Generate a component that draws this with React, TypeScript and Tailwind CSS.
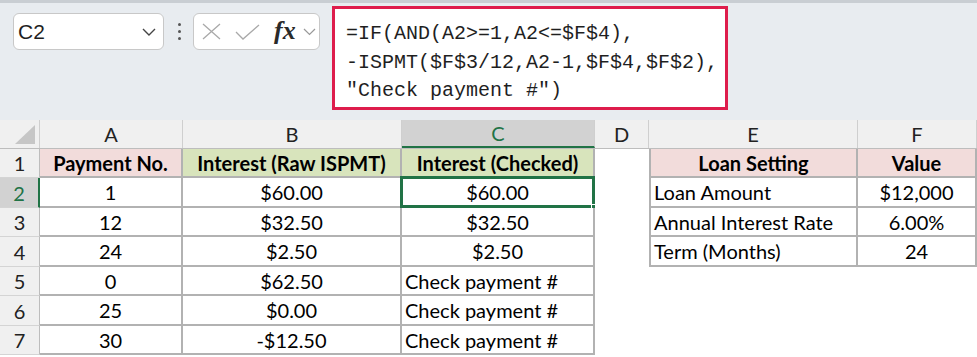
import React from 'react';

const COLS = ['A', 'B', 'C', 'D', 'E', 'F'];
const WIDTHS = ['w-[143px]', 'w-[219px]', 'w-[193px]', 'w-[54px]', 'w-[209px]', 'w-[119px]'];
const HEIGHTS = ['h-[29px]', 'h-[30px]', 'h-[29px]', 'h-[30px]', 'h-[29px]', 'h-[30px]', 'h-[29px]'];

type Cell = { text?: string; bold?: boolean; left?: boolean; fill?: string; border?: boolean; borderL?: boolean };

const pink = 'bg-[#f2dcdb]';
const green = 'bg-[#d8e4bc]';

const rows: Cell[][] = [
  [
    { text: 'Payment No.', bold: true, fill: pink, border: true },
    { text: 'Interest (Raw ISPMT)', bold: true, fill: green, border: true },
    { text: 'Interest (Checked)', bold: true, fill: green, border: true },
    {},
    { text: 'Loan Setting', bold: true, fill: pink, border: true, borderL: true },
    { text: 'Value', bold: true, fill: pink, border: true },
  ],
  [
    { text: '1', border: true },
    { text: '$60.00', border: true },
    { text: '$60.00', border: true },
    {},
    { text: 'Loan Amount', left: true, border: true, borderL: true },
    { text: '$12,000', border: true },
  ],
  [
    { text: '12', border: true },
    { text: '$32.50', border: true },
    { text: '$32.50', border: true },
    {},
    { text: 'Annual Interest Rate', left: true, border: true, borderL: true },
    { text: '6.00%', border: true },
  ],
  [
    { text: '24', border: true },
    { text: '$2.50', border: true },
    { text: '$2.50', border: true },
    {},
    { text: 'Term (Months)', left: true, border: true, borderL: true },
    { text: '24', border: true },
  ],
  [
    { text: '0', border: true },
    { text: '$62.50', border: true },
    { text: 'Check payment #', left: true, border: true },
    {},
    {},
    {},
  ],
  [
    { text: '25', border: true },
    { text: '$0.00', border: true },
    { text: 'Check payment #', left: true, border: true },
    {},
    {},
    {},
  ],
  [
    { text: '30', border: true },
    { text: '-$12.50', border: true },
    { text: 'Check payment #', left: true, border: true },
    {},
    {},
    {},
  ],
];

const FormulaBar: React.FC = () => (
  <div className="h-[120px] bg-[#e8ecf0] flex items-start border-t-[3px] border-[#c9ced3]">
    {/* Name box */}
    <div className="mt-[10px] ml-[13px] w-[151px] h-[37px] bg-white border border-[#c8c8c8] rounded-[6px] flex items-center justify-between pl-[4px] pr-[7px]">
      <span className="text-[21px] text-[#1f1f1f]">C2</span>
      <svg width="14" height="8" viewBox="0 0 14 8">
        <path d="M1 1 L7 7 L13 1" fill="none" stroke="#444" strokeWidth="1.4" />
      </svg>
    </div>
    {/* dots */}
    <div className="mt-[20px] ml-[13px] w-[4px] flex flex-col gap-[4px] items-center">
      <span className="w-[3px] h-[3px] bg-[#555] rounded-full" />
      <span className="w-[3px] h-[3px] bg-[#555] rounded-full" />
      <span className="w-[3px] h-[3px] bg-[#555] rounded-full" />
    </div>
    {/* buttons */}
    <div className="mt-[10px] ml-[12px] w-[127px] h-[37px] bg-white border border-[#c8c8c8] rounded-[6px] flex items-center pl-[8px]">
      <svg width="19" height="17" viewBox="0 0 19 17">
        <path d="M1 1 L18 16 M18 1 L1 16" stroke="#a9a9a9" strokeWidth="1.3" fill="none" />
      </svg>
      <svg width="25" height="16" viewBox="0 0 25 16" className="ml-[14px]">
        <path d="M1 8 L8 15 L24 1" stroke="#a9a9a9" strokeWidth="1.3" fill="none" />
      </svg>
      <span className="ml-[14px] text-[26px] italic font-bold text-[#2a2a2a] leading-none pb-[2px]" style={{ fontFamily: '"Liberation Serif", serif' }}>
        fx
      </span>
      <svg width="13" height="8" viewBox="0 0 13 8" className="ml-[7px]">
        <path d="M1 1 L6.5 6.5 L12 1" fill="none" stroke="#999" strokeWidth="1.2" />
      </svg>
    </div>
    {/* formula */}
    <div className="mt-[3px] ml-[12px] w-[396px] h-[104px] bg-white border-[3px] border-[#de1d4c] pl-[11px] pt-[11px]">
      <pre className="text-[20px] leading-[28.5px] text-[#1f1f1f]" style={{ fontFamily: '"Liberation Mono", monospace' }}>
        {'=IF(AND(A2>=1,A2<=$F$4),\n-ISPMT($F$3/12,A2-1,$F$4,$F$2),\n"Check payment #")'}
      </pre>
    </div>
  </div>
);

const Grid: React.FC = () => (
  <div className="text-[20px] text-black" style={{ fontFamily: 'Lato, "Liberation Sans", sans-serif' }}>
    {/* column headers */}
    <div className="flex h-[29px] bg-[#f0f0f0] border-b border-[#bdbdbd]">
      <div className="w-[40px] border-r border-[#cfcfcf] flex items-end justify-end pr-[4px] pb-[4px]">
        <svg width="20" height="19" viewBox="0 0 20 19">
          <path d="M20 0 L20 19 L0 19 Z" fill="#c6c6c6" />
        </svg>
      </div>
      {COLS.map((c, i) => (
        <div
          key={c}
          className={`${WIDTHS[i]} flex items-center justify-center ${
            c === 'C'
              ? 'bg-[#d2d2d2] text-[#217346] border-b-2 border-[#217346] border-r border-r-[#cfcfcf]'
              : 'border-r border-[#cfcfcf] text-[#222]'
          }`}
        >
          {c}
        </div>
      ))}
    </div>
    {rows.map((row, r) => (
      <div key={r} className={`flex ${HEIGHTS[r]}`}>
        <div
          className={`w-[40px] flex items-center justify-center border-b border-[#d4d4d4] ${
            r === 1 ? 'bg-[#d2d2d2] text-[#217346] border-r-2 border-r-[#217346]' : 'bg-[#f0f0f0] text-[#222] border-r border-r-[#bdbdbd]'
          }`}
        >
          {r + 1}
        </div>
        {row.map((cell, c) => (
          <div
            key={c}
            className={`${WIDTHS[c]} relative flex items-center whitespace-nowrap ${cell.left ? 'justify-start pl-[3px]' : 'justify-center'} ${
              cell.fill ?? 'bg-white'
            } ${cell.bold ? 'font-bold' : ''} ${cell.border ? 'border-r-2 border-b-2 border-[#b2b2b2]' : ''} ${
              cell.borderL ? 'border-l-2 border-l-[#b2b2b2]' : ''
            }`}
          >
            {cell.text}
            {r === 1 && c === 2 && (
              <>
                <div className="absolute left-[-2px] top-[-2px] right-[-2px] bottom-[-2px] border-[3px] border-[#217346]" />
                <div className="absolute right-[-5px] bottom-[-5px] w-[7px] h-[7px] bg-[#217346] border border-white" />
              </>
            )}
          </div>
        ))}
      </div>
    ))}
  </div>
);

export default function App() {
  return (
    <div className="w-[977px] h-[357px] overflow-hidden bg-white" style={{ fontFamily: '"Liberation Sans", sans-serif' }}>
      <FormulaBar />
      <Grid />
    </div>
  );
}
